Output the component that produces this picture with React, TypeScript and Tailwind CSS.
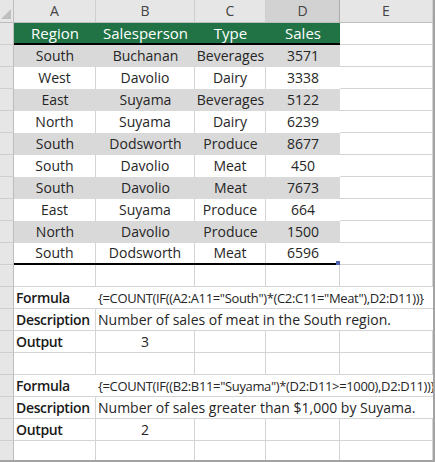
import React from "react";

const font = { fontFamily: '"Open Sans", "Noto Sans", sans-serif' };

const data = [
  ["South", "Buchanan", "Beverages", "3571"],
  ["West", "Davolio", "Dairy", "3338"],
  ["East", "Suyama", "Beverages", "5122"],
  ["North", "Suyama", "Dairy", "6239"],
  ["South", "Dodsworth", "Produce", "8677"],
  ["South", "Davolio", "Meat", "450"],
  ["South", "Davolio", "Meat", "7673"],
  ["East", "Suyama", "Produce", "664"],
  ["North", "Davolio", "Produce", "1500"],
  ["South", "Dodsworth", "Meat", "6596"],
];

const cols = "grid grid-cols-[14px_82px_99px_71px_74px_93px]";

// row numbers are scrolled out of view in the reference, only the header strip shows
function RowHead() {
  return <div className="h-[22px] bg-[#e6e6e6] border-r border-r-[#bdbdbd] border-b border-b-[#cfcfcf]" />;
}

function Blank() {
  return <div className="h-[22px] border-r border-b border-[#d4d4d4]" />;
}

function EmptyRow() {
  return (
    <div className={cols}>
      <RowHead />
      <Blank />
      <Blank />
      <Blank />
      <Blank />
      <Blank />
    </div>
  );
}

const label = "h-[22px] pl-[2px] text-[14px] leading-[22px] font-semibold text-[#1a1a1a] tracking-[-0.35px] whitespace-nowrap";

function FormulaBlock({ formula, desc, out }: { formula: string; desc: string; out: string }) {
  return (
    <>
      <div className={cols}>
        <RowHead />
        <div className={`${label} border-b border-[#d4d4d4]`}>Formula</div>
        <div className="col-span-4 h-[22px] border-b border-[#d4d4d4] pl-[2px] text-[13px] leading-[22px] text-[#262626] whitespace-nowrap tracking-[-0.35px]">
          {formula}
        </div>
      </div>
      <div className={cols}>
        <RowHead />
        <div className={`${label} border-r border-b border-[#d4d4d4]`}>Description</div>
        <div className="col-span-4 h-[22px] border-b border-[#d4d4d4] pl-[2px] text-[14px] leading-[22px] text-[#262626] whitespace-nowrap">
          {desc}
        </div>
      </div>
      <div className={cols}>
        <RowHead />
        <div className={`${label} border-r border-b border-[#d4d4d4]`}>Output</div>
        <div className="h-[22px] border-r border-b border-[#d4d4d4] text-center text-[14px] leading-[22px] text-[#262626]">{out}</div>
        <Blank />
        <Blank />
        <Blank />
      </div>
    </>
  );
}

export default function App() {
  return (
    <div className="w-[435px] h-[462px] overflow-hidden bg-white border-r-2 border-b-2 border-[#a3a3a3] text-[#262626]" style={font}>
      {/* column letters */}
      <div className={`${cols} h-[23px] bg-[#e6e6e6] border-b border-[#bdbdbd] text-[14px] leading-[22px] text-[#444]`}>
        <div className="relative border-r border-[#bdbdbd]">
          <div className="absolute right-[2px] bottom-[3px] w-0 h-0 border-l-[10px] border-l-transparent border-b-[10px] border-b-[#bfbfbf]" />
        </div>
        <div className="text-center border-r border-[#cfcfcf]">A</div>
        <div className="text-center border-r border-[#cfcfcf]">B</div>
        <div className="text-center border-r border-[#cfcfcf]">C</div>
        <div className="text-center bg-[#d2d2d2] border-r border-[#ababab]">D</div>
        <div className="text-center border-r border-[#cfcfcf]">E</div>
      </div>

      {/* table header */}
      <div className={cols}>
        <RowHead />
        <div className="col-span-4 grid grid-cols-[82px_99px_71px_74px] h-[22px] bg-[#217346] border-b-2 border-black text-white text-[15px] leading-[20px]">
          <div className="text-center">Region</div>
          <div className="text-center">Salesperson</div>
          <div className="text-center">Type</div>
          <div className="text-center">Sales</div>
        </div>
        <Blank />
      </div>

      {/* data */}
      {data.map((r, i) => {
        const gray = i % 2 === 0;
        const last = i === data.length - 1;
        return (
          <div key={i} className={cols}>
            <RowHead />
            <div
              className={`relative col-span-4 grid grid-cols-[82px_99px_71px_74px] h-[22px] text-[14px] text-[#262626] ${
                gray ? "bg-[#d9d9d9]" : "bg-white"
              } ${last ? "border-b-2 border-black leading-[20px]" : "leading-[22px]"}`}
            >
              {r.map((c, j) => (
                <div key={j} className={`text-center ${!gray && j < 3 ? "border-r border-[#d4d4d4]" : ""}`}>
                  {c}
                </div>
              ))}
              {last && <div className="absolute right-0 bottom-[-2px] w-[4px] h-[4px] bg-[#4b62b3]" />}
            </div>
            <Blank />
          </div>
        );
      })}

      <EmptyRow />

      <FormulaBlock
        formula={'{=COUNT(IF((A2:A11="South")*(C2:C11="Meat"),D2:D11))}'}
        desc="Number of sales of meat in the South region."
        out="3"
      />

      <EmptyRow />

      <FormulaBlock
        formula={'{=COUNT(IF((B2:B11="Suyama")*(D2:D11>=1000),D2:D11))}'}
        desc="Number of sales greater than $1,000 by Suyama."
        out="2"
      />

      <EmptyRow />
    </div>
  );
}
